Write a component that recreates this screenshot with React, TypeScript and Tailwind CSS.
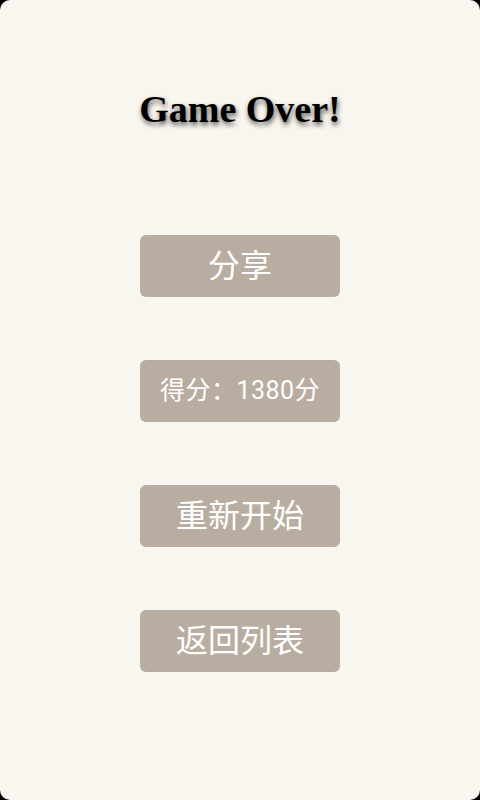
const buttons = [
  { label: "分享", size: "text-[32px]" },
  { label: "得分：1380分", size: "text-[25px] tracking-[0.5px]" },
  { label: "重新开始", size: "text-[32px]" },
  { label: "返回列表", size: "text-[32px]" },
];

export default function App() {
  return (
    <div className="h-[800px] w-[480px] bg-black">
      <div className="flex h-full w-full flex-col items-center rounded-[10px] bg-[#f9f6ef]">
        <h1
          className="mt-[86px] h-[46px] text-[38px] font-bold leading-[46px] text-black [text-shadow:1px_3px_5px_rgba(0,0,0,0.65)]"
          style={{ fontFamily: '"Liberation Serif", "DejaVu Serif", serif' }}
        >
          Game Over!
        </h1>
        <div className="mt-[103px] flex flex-col gap-[63px]">
          {buttons.map((b) => (
            <div
              key={b.label}
              className={`flex h-[62px] w-[200px] items-center justify-center rounded-[6px] bg-[#b9ada1] text-white ${b.size}`}
              style={{ fontFamily: '"Roboto", "Noto Sans CJK SC", sans-serif' }}
            >
              {b.label}
            </div>
          ))}
        </div>
      </div>
    </div>
  );
}
